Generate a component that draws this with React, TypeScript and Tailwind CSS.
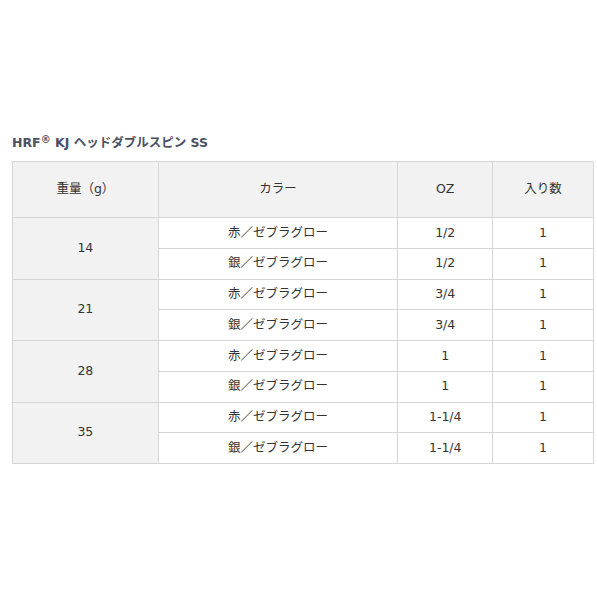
const rows = [
   { weight: '14', items: [['赤／ゼブラグロー', '1/2', '1'], ['銀／ゼブラグロー', '1/2', '1']] },
   { weight: '21', items: [['赤／ゼブラグロー', '3/4', '1'], ['銀／ゼブラグロー', '3/4', '1']] },
   { weight: '28', items: [['赤／ゼブラグロー', '1', '1'], ['銀／ゼブラグロー', '1', '1']] },
   { weight: '35', items: [['赤／ゼブラグロー', '1-1/4', '1'], ['銀／ゼブラグロー', '1-1/4', '1']] }
]

export default function App() {
   return (
      <div
         className="w-[597px] h-[597px] bg-white px-3 pt-[134px] text-[#333]"
         style={{ fontFamily: '"DejaVu Sans", "Noto Sans CJK JP", sans-serif' }}
      >
         <h2 className="text-[12.5px] font-bold leading-[18px] text-[#4a5263] mb-[9px]">
            HRF<span className="text-[10px] leading-none align-[4px]">®</span> KJ ヘッドダブルスピン SS
         </h2>
         <table className="w-[582px] border-collapse text-[12.5px] text-center">
            <colgroup>
               <col className="w-[146px]" />
               <col className="w-[240px]" />
               <col className="w-[95px]" />
               <col className="w-[101px]" />
            </colgroup>
            <thead>
               <tr className="h-[56px] bg-[#f2f2f2]">
                  <th className="border border-[#d6d6d6] font-normal">重量（g）</th>
                  <th className="border border-[#d6d6d6] font-normal">カラー</th>
                  <th className="border border-[#d6d6d6] font-normal">OZ</th>
                  <th className="border border-[#d6d6d6] font-normal">入り数</th>
               </tr>
            </thead>
            <tbody>
               {rows.map((group) =>
                  group.items.map((item, i) => (
                     <tr key={group.weight + i} className="h-[30.75px]">
                        {i === 0 && (
                           <td rowSpan={2} className="border border-[#d6d6d6] bg-[#f2f2f2]">
                              {group.weight}
                           </td>
                        )}
                        {item.map((cell, j) => (
                           <td key={j} className="border border-[#d6d6d6] p-0">
                              {cell}
                           </td>
                        ))}
                     </tr>
                  ))
               )}
            </tbody>
         </table>
      </div>
   )
}
